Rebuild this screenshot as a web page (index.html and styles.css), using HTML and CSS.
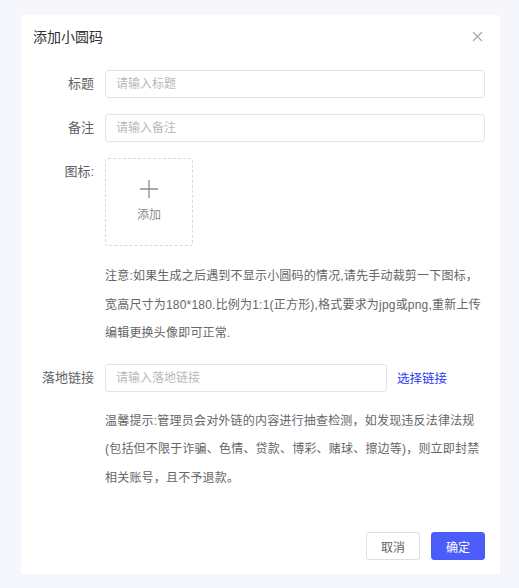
FILE: index.html
```html
<!DOCTYPE html>
<html lang="zh-CN">
<head>
    <meta charset="UTF-8">
    <meta name="viewport" content="width=device-width, initial-scale=1.0">
    <title>添加小圆码</title>
    <link rel="stylesheet" href="styles.css">
</head>
<body>
    <div class="dialog">
        <div class="dialog-header">
            <span class="dialog-title">添加小圆码</span>
            <span class="dialog-close">
                <svg width="11" height="11" viewBox="0 0 11 11"><path d="M1 1L10 10M10 1L1 10" stroke="#a3a6ad" stroke-width="1.1" fill="none"/></svg>
            </span>
        </div>

        <div class="form-row">
            <label class="form-label">标题</label>
            <input class="form-input" type="text" placeholder="请输入标题">
        </div>

        <div class="form-row">
            <label class="form-label">备注</label>
            <input class="form-input" type="text" placeholder="请输入备注">
        </div>

        <div class="form-row">
            <label class="form-label">图标:</label>
            <div class="form-field">
                <div class="upload-box">
                    <svg width="20" height="20" viewBox="0 0 20 20"><path d="M10 1V19M1 10H19" stroke="#8c8c8c" stroke-width="1.3" fill="none"/></svg>
                    <span class="upload-text">添加</span>
                </div>
                <p class="form-tip">注意:如果生成之后遇到不显示小圆码的情况,请先手动裁剪一下图标，宽高尺寸为180*180.比例为1:1(正方形),格式要求为jpg或png,重新上传编辑更换头像即可正常.</p>
            </div>
        </div>

        <div class="form-row">
            <label class="form-label">落地链接</label>
            <div class="form-field">
                <div class="link-line">
                    <input class="form-input link-input" type="text" placeholder="请输入落地链接">
                    <a class="link-btn" href="#">选择链接</a>
                </div>
                <p class="form-tip">温馨提示:管理员会对外链的内容进行抽查检测，如发现违反法律法规(包括但不限于诈骗、色情、贷款、博彩、赌球、擦边等)，则立即封禁相关账号，且不予退款。</p>
            </div>
        </div>

        <div class="dialog-footer">
            <button class="btn">取消</button>
            <button class="btn btn-primary">确定</button>
        </div>
    </div>
</body>
</html>
```

FILE: styles.css
```css
* {
    box-sizing: border-box;
}
body {
    margin: 0;
    padding: 15px 19px 14px 21px;
    background-color: #f5f7fc;
    font-family: "Liberation Sans", "Noto Sans CJK SC", sans-serif;
    color: #606266;
}
.dialog {
    background-color: #fff;
    padding: 0 15px 14px 12px;
}
.dialog-header {
    display: flex;
    justify-content: space-between;
    align-items: center;
    height: 42px;
    margin-bottom: 13px;
}
.dialog-title {
    font-size: 14px;
    color: #303133;
}
.dialog-close {
    display: flex;
    margin-right: 2px;
}
.form-row {
    display: flex;
    align-items: flex-start;
    margin-bottom: 16px;
}
.form-label {
    width: 72px;
    flex-shrink: 0;
    padding-right: 11px;
    text-align: right;
    font-size: 13px;
    line-height: 28px;
    color: #606266;
}
.form-input {
    flex: 1;
    height: 28px;
    border: 1px solid #e3e4ea;
    border-radius: 3px;
    padding: 0 10px;
    font-family: inherit;
    font-size: 12px;
    color: #333;
    outline: none;
}
.form-input::placeholder {
    color: #b8b9be;
}
.form-field {
    flex: 1;
}
.upload-box {
    width: 88px;
    height: 88px;
    border: 1px dashed #d9d9de;
    border-radius: 3px;
    display: flex;
    flex-direction: column;
    align-items: center;
    justify-content: center;
    gap: 6px;
    padding-bottom: 4px;
}
.upload-text {
    font-size: 12px;
    color: #8c8c8c;
}
.form-tip {
    margin: 16px 0 0;
    font-size: 12px;
    letter-spacing: 0.2px;
    line-height: 28.5px;
    color: #666;
}
.link-line {
    display: flex;
    align-items: center;
}
.link-line + .form-tip {
    margin-top: 15px;
}
.link-input {
    flex: none;
    width: 282px;
}
.link-btn {
    margin-left: 10px;
    font-size: 12.5px;
    color: #2b3df0;
    text-decoration: none;
}
.dialog-footer {
    display: flex;
    justify-content: flex-end;
    gap: 11px;
    padding-top: 24px;
}
.btn {
    width: 54px;
    height: 28px;
    border: 1px solid #dcdfe6;
    border-radius: 3px;
    background-color: #fff;
    font-family: inherit;
    font-size: 12px;
    color: #606266;
}
.btn-primary {
    border-color: #4b5cfa;
    background-color: #4b5cfa;
    color: #fff;
}
```
